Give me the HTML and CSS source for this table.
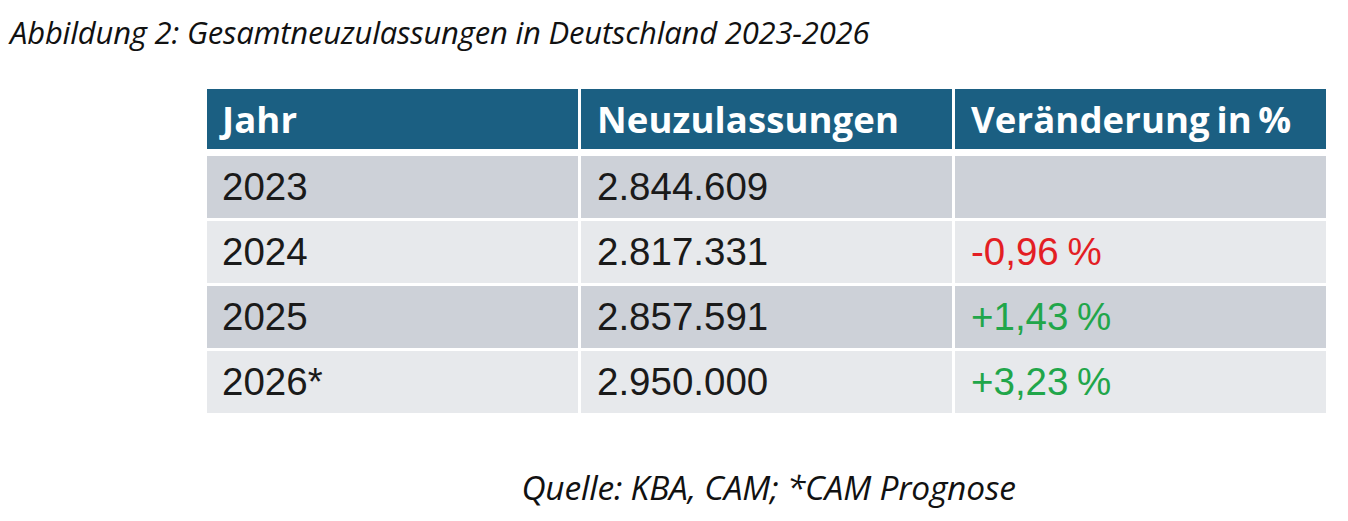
FILE: index.html
```html
<!DOCTYPE html>
<html lang="de">
<head>
<meta charset="utf-8">
<title>Gesamtneuzulassungen in Deutschland 2023-2026</title>
<link rel="stylesheet" href="styles.css">
</head>
<body>
<p class="caption">Abbildung 2: Gesamtneuzulassungen in Deutschland 2023-2026</p>
<div class="figure">
  <div class="table">
    <div class="cell head">Jahr</div>
    <div class="cell head">Neuzulassungen</div>
    <div class="cell head">Veränderung in %</div>

    <div class="cell dark">2023</div>
    <div class="cell dark">2.844.609</div>
    <div class="cell dark"></div>

    <div class="cell light">2024</div>
    <div class="cell light">2.817.331</div>
    <div class="cell light neg">-0,96 %</div>

    <div class="cell dark">2025</div>
    <div class="cell dark">2.857.591</div>
    <div class="cell dark pos">+1,43 %</div>

    <div class="cell light">2026*</div>
    <div class="cell light">2.950.000</div>
    <div class="cell light pos">+3,23 %</div>
  </div>
  <p class="source">Quelle: KBA, CAM; *CAM Prognose</p>
</div>
</body>
</html>
```

FILE: styles.css
```css
html, body {
  margin: 0;
  padding: 0;
  background: #ffffff;
}

body {
  width: 1348px;
  height: 521px;
  overflow: hidden;
}

.caption {
  margin: 0;
  padding: 12px 0 0 10px;
  height: 38px;
  font-family: "Open Sans", "Noto Sans", sans-serif;
  font-style: italic;
  font-size: 31px;
  line-height: 40px;
  color: #111111;
  letter-spacing: -0.2px;
  white-space: nowrap;
}

.figure {
  margin: 39px 0 0 207px;
  width: 1119px;
}

.table {
  display: grid;
  grid-template-columns: 371px 371px 371px;
  grid-template-rows: 64px 62px 62px 62px 62px;
  column-gap: 3px;
  row-gap: 3px;
}

.cell {
  display: flex;
  align-items: center;
  padding-left: 16px;
  font-family: "Liberation Sans", Arial, sans-serif;
  font-size: 38.5px;
  color: #1a1a1a;
  white-space: pre;
}

.cell:nth-child(3n+1) {
  padding-left: 15px;
}

.head {
  background: #1b5f82;
  color: #ffffff;
  font-family: "Open Sans", "Noto Sans", sans-serif;
  font-weight: 700;
  font-size: 36.5px;
  letter-spacing: 0.1px;
  word-spacing: -3px;
  margin-bottom: 4px;
}

.dark {
  background: #cdd1d8;
}

.light {
  background: #e7e9ec;
}

.neg {
  color: #e31e24;
  word-spacing: -2px;
}

.pos {
  color: #21a64a;
  word-spacing: -2px;
}

.source {
  margin: 54px 0 0 0;
  text-align: center;
  font-family: "Open Sans", "Noto Sans", sans-serif;
  font-style: italic;
  font-size: 33.5px;
  line-height: 40px;
  color: #111111;
  letter-spacing: -0.2px;
  padding-left: 4px;
}
```
